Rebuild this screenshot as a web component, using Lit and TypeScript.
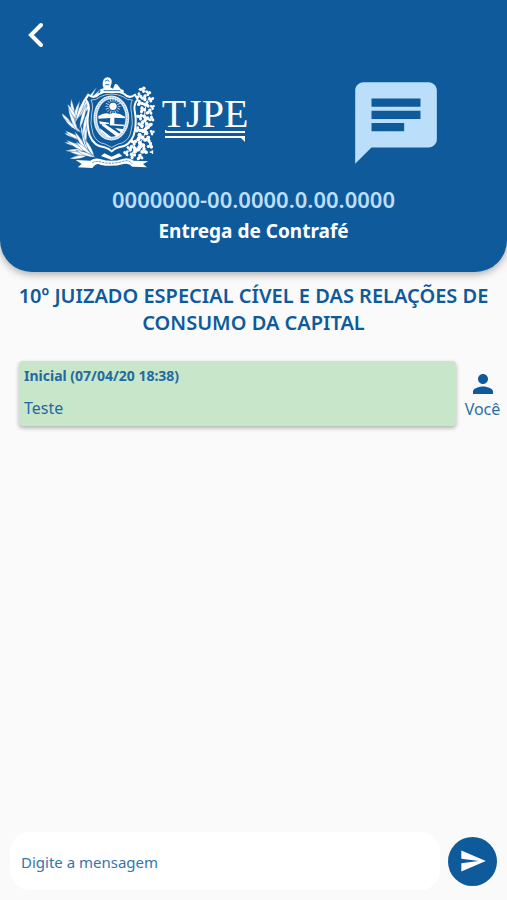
import { LitElement, html, svg, css } from "lit";
import { customElement, property } from "lit/decorators.js";

type Leaf = [number, number, number, number];

// Leaves of the cane branch and bolls of the cotton branch: x, y, direction in degrees, size.
const caneLeaves: Leaf[] = [
  [60, 168, -58, 124], [66, 160, -52, 116], [56, 178, -66, 108], [76, 150, -46, 84], [50, 188, -74, 88],
  [60, 165, -100, 68], [66, 160, -122, 54], [54, 180, -132, 52], [80, 200, -142, 66],
  [76, 215, -165, 50], [84, 225, -150, 62], [90, 240, -170, 64], [96, 250, 176, 66],
  [96, 258, -150, 72], [100, 262, -122, 78], [100, 262, -105, 88], [104, 265, 168, 62],
  [92, 235, -90, 78], [84, 215, -80, 78], [112, 268, -140, 64], [118, 272, -118, 58],
  [74, 190, -74, 78], [70, 200, -112, 82], [110, 268, -170, 70], [122, 274, -160, 64],
];

const cottonBolls: Leaf[] = [
  [262, 70, 0, 9], [279, 80, 0, 8], [253, 88, 0, 8], [268, 95, 0, 9], [289, 100, 0, 8],
  [256, 112, 0, 9], [275, 116, 0, 9], [292, 124, 0, 7], [262, 132, 0, 9], [282, 138, 0, 9],
  [254, 152, 0, 9], [272, 156, 0, 10], [290, 158, 0, 8], [260, 174, 0, 10], [282, 178, 0, 10],
  [250, 192, 0, 9], [270, 196, 0, 11], [291, 200, 0, 7], [254, 214, 0, 11], [276, 220, 0, 10],
  [236, 228, 0, 9], [258, 236, 0, 11], [286, 238, 0, 9], [226, 246, 0, 9], [244, 252, 0, 11],
  [268, 256, 0, 10], [214, 262, 0, 8], [232, 270, 0, 9], [254, 274, 0, 9], [290, 258, 0, 5],
];

const leafShape = ([x, y, a, l]: Leaf) => svg`
  <path transform="translate(${x} ${y}) rotate(${a})"
    d="M0 0 Q${l * 0.5} -12 ${l} 0 Q${l * 0.5} 8 0 0Z" />`;

const bollShape = ([x, y, , r]: Leaf, i: number) => svg`
  <g transform="translate(${x} ${y}) rotate(${i * 37})">
    <ellipse cx="${-r * 0.5}" cy="0" rx="${r * 0.7}" ry="${r * 0.55}" />
    <ellipse cx="${r * 0.5}" cy="${-r * 0.4}" rx="${r * 0.6}" ry="${r * 0.55}" />
    <ellipse cx="${r * 0.4}" cy="${r * 0.6}" rx="${r * 0.5}" ry="${r * 0.6}" />
  </g>`;

@customElement("court-logo")
class CourtLogo extends LitElement {
  static styles = css`
    :host { display: flex; align-items: flex-start; gap: 6px; color: #fff; }
    .arms { display: block; width: 96px; height: 99px; }
    .name { display: flex; flex-direction: column; width: 82px; padding-top: 24px; }
    .letters {
      display: flex; justify-content: center; white-space: nowrap;
      font: 40px/32px "Liberation Serif", serif;
    }
    .rules { display: block; width: 82px; height: 14px; }
  `;

  render() {
    return html`
      <svg class="arms" viewBox="21 24 288 297" fill="#fff" aria-hidden="true">
        <g stroke="#0f5a9b" stroke-width="1">${caneLeaves.map(leafShape)}</g>
        <path d="M284 92Q262 130 272 170T226 268" fill="none" stroke="#fff" stroke-width="3" />
        ${cottonBolls.map(bollShape)}
        <path d="M100 86Q118 100 132 84Q150 74 170 74Q190 74 208 84Q222 100 240 86L248 100Q234 116 240 140Q246 176 236 208Q224 240 192 244Q178 248 170 256Q162 248 148 244Q116 240 104 208Q94 176 100 140Q106 116 92 100Z"
          fill="#0f5a9b" stroke="#fff" stroke-width="6" stroke-linejoin="round" />
        <path d="M108 102Q122 104 136 92Q152 84 170 84Q188 84 204 92Q218 104 232 102Q224 118 230 142Q236 174 226 204Q216 230 190 234L170 244L150 234Q124 230 114 204Q104 174 110 142Q116 118 108 102Z"
          fill="none" stroke="#fff" stroke-width="2" />
        <ellipse cx="169" cy="156" rx="48" ry="62" fill="#0f5a9b" stroke="#dcebf7" stroke-width="11" />
        <ellipse cx="169" cy="156" rx="48" ry="62" fill="none" stroke="#6f9fc9" stroke-width="3" stroke-dasharray="3 4" />
        <circle cx="174" cy="121" r="11" />
        <g stroke="#fff" stroke-width="2">
          ${Array.from({ length: 16 }, (_, i) => svg`<path transform="rotate(${i * 22.5} 174 121)" d="M174 107V98" />`)}
        </g>
        <path d="M130 150Q150 138 164 144Q186 136 210 152V157L178 155V174L208 176L209 181L164 178L166 156L130 158Z" />
        <path d="M132 166L162 170V174L136 175ZM146 172L196 205L186 212L140 178ZM180 186L207 190L201 202ZM134 186L172 216L158 214L138 196Z" />
        <path d="M143 58Q142 34 158 34Q172 36 170 50L166 64L174 68L180 54Q188 52 192 62L198 70L206 72V81H136V70L146 67Z" />
        <path d="M150 46Q157 38 163 46M151 56H163M146 74H196" fill="none" stroke="#0f5a9b" stroke-width="2.5" />
        <path d="M62 282L106 284Q120 274 138 280Q170 290 206 278Q220 274 236 284L280 286L264 294L276 304L232 302Q222 290 206 294Q170 304 136 296Q124 290 112 306L68 304L80 294Z" />
        <path d="M112 290Q122 284 138 288Q170 296 204 286Q222 280 232 294" fill="none" stroke="#0f5a9b" stroke-width="2" stroke-dasharray="7 3" />
        <path d="M148 262L170 272L192 262L202 270L170 282L138 270Z" />
      </svg>
      <div class="name">
        <span class="letters">TJPE</span>
        <svg class="rules" viewBox="0 0 82 14" fill="#fff" aria-hidden="true">
          <path d="M1 -1L3 1H81V3H1ZM1 6H81V12L77 8H1Z" />
        </svg>
      </div>
    `;
  }
}

@customElement("message-card")
class MessageCard extends LitElement {
  @property() heading = "";
  @property() text = "";
  @property() author = "";

  static styles = css`
    :host { display: flex; align-items: center; }
    .bubble {
      flex: 1; box-sizing: border-box; min-height: 65px; padding: 4px 5px;
      background: #c8e6c9; border-radius: 4px; color: #236b9f;
      box-shadow: 0 2px 4px rgba(0, 0, 0, 0.3);
    }
    h2 { margin: 0 0 9px; font-size: 14px; line-height: 22px; font-weight: 700; }
    p { margin: 0; font-size: 16px; line-height: 24px; }
    .author {
      display: flex; flex-direction: column; align-items: center;
      width: 51px; padding-left: 2px; box-sizing: border-box;
      color: #0f5a9b; font-size: 16px; line-height: 20px;
    }
    .person { display: block; width: 30px; height: 30px; }
    .who { color: #2c6ea8; }
  `;

  render() {
    return html`
      <article class="bubble">
        <h2>${this.heading}</h2>
        <p>${this.text}</p>
      </article>
      <div class="author">
        <svg class="person" viewBox="0 0 24 24" fill="currentColor" aria-hidden="true">
          <path d="M12 12c2.21 0 4-1.79 4-4s-1.79-4-4-4-4 1.79-4 4 1.79 4 4 4zm0 2c-2.67 0-8 1.34-8 4v2h16v-2c0-2.66-5.33-4-8-4z" />
        </svg>
        <span class="who">${this.author}</span>
      </div>
    `;
  }
}

@customElement("app-root")
class AppRoot extends LitElement {
  static styles = css`
    :host {
      display: flex; flex-direction: column; min-height: 100vh; background: #fafafa;
      color: #0f5a9b; font-family: "Noto Sans", "Open Sans", sans-serif;
    }
    header {
      display: flex; flex-direction: column; padding-bottom: 24px; background: #0f5a9b;
      border-radius: 0 0 32px 32px; box-shadow: 0 2px 8px rgba(0, 0, 0, 0.35); text-align: center;
    }
    button { border: 0; padding: 0; cursor: pointer; }
    .back { width: 48px; height: 48px; margin: 11px 0 0 12px; background: none; }
    .back svg { display: block; margin: auto; width: 36px; height: 36px; }
    .brand { display: flex; justify-content: space-between; padding: 15px 62px 0; height: 110px; }
    .chat { display: block; width: 98px; height: 98px; }
    .number { margin: 0; color: #bbdefb; font-size: 22px; line-height: 30px; font-weight: 600; }
    .subject { margin: 0; color: #fff; font-size: 19px; line-height: 34px; font-weight: 700; }
    main { flex: 1; padding: 10px 0 0; }
    .court {
      margin: 0 10px 25px; font-size: 20px; line-height: 27px; font-weight: 600; text-align: center;
    }
    message-card { margin-left: 19px; }
    form { display: flex; align-items: center; gap: 8px; padding: 10px; }
    input {
      flex: 1; min-width: 0; box-sizing: border-box; height: 58px; padding: 2px 11px 0; border: 0;
      border-radius: 20px; background: #fff; color: #0f5a9b; font: inherit; font-size: 15px; outline: 0;
    }
    input::placeholder { color: #3474ab; opacity: 1; }
    .send { width: 49px; height: 49px; border-radius: 50%; background: #0f5a9b; }
    .send svg { display: block; margin: auto; width: 28px; height: 28px; }
  `;

  render() {
    return html`
      <header>
        <button class="back" aria-label="Voltar">
          <svg viewBox="0 0 36 36" fill="none" stroke="#fff" stroke-width="4" stroke-linecap="round">
            <path d="M23 8L13 18L23 28" />
          </svg>
        </button>
        <div class="brand">
          <court-logo></court-logo>
          <svg class="chat" viewBox="0 0 24 24" fill="#bbdefb" aria-hidden="true">
            <path d="M20 2H4c-1.1 0-1.99.9-1.99 2L2 22l4-4h14c1.1 0 2-.9 2-2V4c0-1.1-.9-2-2-2zM6 9h12v2H6V9zm8 5H6v-2h8v2zm4-6H6V6h12v2z" />
          </svg>
        </div>
        <p class="number">0000000-00.0000.0.00.0000</p>
        <p class="subject">Entrega de Contrafé</p>
      </header>
      <main>
        <h1 class="court">10º JUIZADO ESPECIAL CÍVEL E DAS RELAÇÕES DE CONSUMO DA CAPITAL</h1>
        <message-card heading="Inicial (07/04/20 18:38)" text="Teste" author="Você"></message-card>
      </main>
      <form @submit=${(e: Event) => e.preventDefault()}>
        <input type="text" aria-label="Mensagem" placeholder="Digite a mensagem" />
        <button class="send" aria-label="Enviar">
          <svg viewBox="0 0 24 24" fill="#fff">
            <path d="M2.01 21L23 12 2.01 3 2 10l15 2-15 2z" />
          </svg>
        </button>
      </form>
    `;
  }
}
